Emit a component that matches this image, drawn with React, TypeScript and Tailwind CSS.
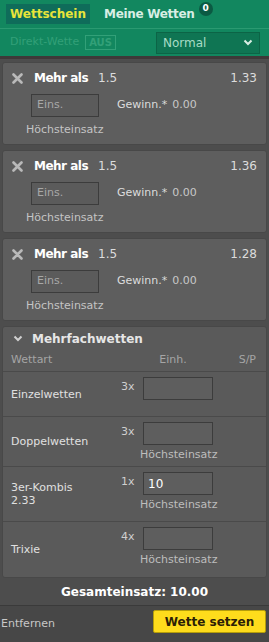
import React from "react";

type Selection = { odds: string };

const selections: Selection[] = [{ odds: "1.33" }, { odds: "1.36" }, { odds: "1.28" }];

type MultiRow = {
  label: string;
  sub?: string;
  mult: string;
  value?: string;
  max: boolean;
  h: string;
};

const multiRows: MultiRow[] = [
  { label: "Einzelwetten", mult: "3x", max: false, h: "h-[45px]" },
  { label: "Doppelwetten", mult: "3x", max: true, h: "h-[50px]" },
  { label: "3er-Kombis", sub: "2.33", mult: "1x", value: "10", max: true, h: "h-[55px]" },
  { label: "Trixie", mult: "4x", max: true, h: "h-[55px]" },
];

function CloseIcon() {
  return (
    <svg width="11" height="11" viewBox="0 0 11 11">
      <path d="M1.5 1.5 L9.5 9.5 M9.5 1.5 L1.5 9.5" stroke="#b9b9b9" strokeWidth="2.6" strokeLinecap="round" />
    </svg>
  );
}

function Chevron({ color }: { color: string }) {
  return (
    <svg width="10" height="7" viewBox="0 0 10 7">
      <path d="M1.5 1.5 L5 5 L8.5 1.5" fill="none" stroke={color} strokeWidth="2" />
    </svg>
  );
}

function SelectionCard({ sel }: { sel: Selection }) {
  return (
    <div className="mx-[2px] h-[83px] rounded-[3px] border border-[#484848] bg-[#5e5e5e]">
      <div className="flex h-[30px] items-center pl-[9px] pr-[9px]">
        <CloseIcon />
        <span className="ml-[11px] text-[12px] font-bold tracking-[-0.5px] text-white">Mehr als</span>
        <span className="ml-[10px] text-[12px] text-[#dcdcdc]">1.5</span>
        <span className="ml-auto text-[12px] text-[#dcdcdc]">{sel.odds}</span>
      </div>
      <div className="flex h-[24px] items-center pl-[28px]">
        <div className="flex h-[23px] w-[68px] items-center border border-[#3c3c3c] bg-[#5b5b5b] pl-[5px] text-[11px] text-[#a8a8a8]">
          Eins.
        </div>
        <span className="ml-[18px] text-[11px] text-[#dcdcdc]">Gewinn.*</span>
        <span className="ml-[5px] text-[11px] text-[#c8c8c8]">0.00</span>
      </div>
      <div className="pl-[23px] pt-[5px] text-[11px] text-[#c4c4c4]">Höchsteinsatz</div>
    </div>
  );
}

export default function App() {
  return (
    <div
      className="flex h-[642px] w-[269px] flex-col overflow-hidden bg-[#4d4d4d]"
      style={{ fontFamily: '"DejaVu Sans", Verdana, sans-serif' }}
    >
      <div className="border-b-[3px] border-[#3e3939] bg-[#12875f]">
        <div className="flex h-[29px] items-center border-b border-[#2a9a71] pl-[6px]">
          <div className="flex h-[20px] w-[84px] items-center justify-center bg-[#0f6c5a] text-[12px] font-bold text-[#e8e43a]">
            Wettschein
          </div>
          <div className="relative ml-[14px] text-[12px] font-bold tracking-[-0.3px] text-[#d8eee4]">
            Meine Wetten
            <span className="absolute -right-[18px] -top-[3px] flex h-[14px] w-[14px] items-center justify-center rounded-full bg-[#0b5a43] text-[9px] font-bold text-white">
              0
            </span>
          </div>
        </div>
        <div className="flex h-[27px] items-center pl-[10px] pr-[9px]">
          <span className="text-[11px] text-[#32a078]">Direkt-Wette</span>
          <span className="ml-[6px] flex h-[15px] items-center border border-[#32a078] px-[3px] text-[10px] font-bold text-[#32a078]">
            AUS
          </span>
          <div className="ml-auto flex h-[22px] w-[104px] items-center border border-[#0c6446] bg-[#0f7553] pl-[6px] pr-[6px]">
            <span className="text-[12px] text-[#a8dcc5]">Normal</span>
            <span className="ml-auto">
              <Chevron color="#d8eee4" />
            </span>
          </div>
        </div>
      </div>

      <div className="flex flex-col gap-[5px] pt-[3px]">
        {selections.map((s, i) => (
          <SelectionCard key={i} sel={s} />
        ))}
      </div>

      <div className="mx-[2px] mt-[5px] rounded-[3px] border border-[#484848] bg-[#5a5a5a]">
        <div className="flex h-[23px] items-center pl-[10px]">
          <Chevron color="#d0d0d0" />
          <span className="ml-[9px] text-[12px] font-bold text-[#e6e6e6]">Mehrfachwetten</span>
        </div>
        <div className="flex h-[22px] items-center border-b border-[#4a4a4a] pl-[8px] pr-[10px] text-[11px] text-[#a5a5a5]">
          <span>Wettart</span>
          <span className="ml-[107px]">Einh.</span>
          <span className="ml-auto">S/P</span>
        </div>
        {multiRows.map((r, i) => (
          <div
            key={i}
            className={`flex ${r.h} ${i < multiRows.length - 1 ? "border-b border-[#4a4a4a]" : ""}`}
          >
            <div className="flex w-[118px] flex-col justify-center pl-[8px] text-[11px] leading-[13px] text-[#e0e0e0]">
              <span>{r.label}</span>
              {r.sub ? <span>{r.sub}</span> : null}
            </div>
            <div className="flex flex-col pt-[5px]">
              <div className="flex">
                <span className="w-[22px] pt-[2px] text-[11px] text-[#cfcfcf]">{r.mult}</span>
                <div className="flex h-[23px] w-[70px] items-center border border-[#3c3c3c] bg-[#5e5e5e] pl-[4px] text-[12px] text-white">
                  {r.value ?? ""}
                </div>
              </div>
              {r.max ? (
                <span className="pl-[19px] pt-[2px] text-[11px] text-[#bdbdbd]">Höchsteinsatz</span>
              ) : null}
            </div>
          </div>
        ))}
      </div>

      <div className="flex h-[28px] items-center justify-center border-b border-[#3a3a3a] text-[12px] font-bold text-white">
        Gesamteinsatz: 10.00
      </div>
      <div className="flex flex-1 items-start bg-[#474747] pr-[3px] pt-[4px]">
        <span className="pl-[1px] pt-[6px] text-[11px] text-[#c8c8c8]">Entfernen</span>
        <button
          type="button"
          className="ml-auto flex h-[23px] w-[113px] items-center justify-center rounded-[2px] border border-[#b59d0a] bg-[#fedc1c] text-[12px] font-bold text-[#2b2006]"
        >
          Wette setzen
        </button>
      </div>
    </div>
  );
}
